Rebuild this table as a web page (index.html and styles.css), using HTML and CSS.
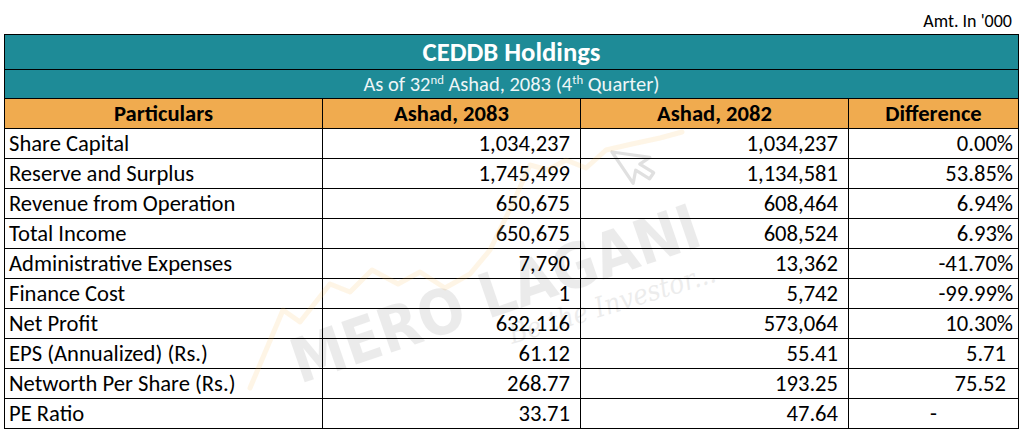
FILE: index.html
```html
<!DOCTYPE html>
<html lang="en">
<head>
<meta charset="utf-8">
<title>CEDDB Holdings</title>
<link rel="stylesheet" href="styles.css">
</head>
<body>
<div class="page">
  <div class="note">Amt. In '000</div>
  <table class="fin">
    <colgroup>
      <col class="c1"><col class="c2"><col class="c3"><col class="c4">
    </colgroup>
    <thead>
      <tr class="title"><th colspan="4">CEDDB Holdings</th></tr>
      <tr class="sub"><th colspan="4">As of 32<sup>nd</sup> Ashad, 2083 (4<sup>th</sup> Quarter)</th></tr>
      <tr class="head"><th>Particulars</th><th>Ashad, 2083</th><th>Ashad, 2082</th><th>Difference</th></tr>
    </thead>
    <tbody>
      <tr><td class="lbl">Share Capital</td><td class="num">1,034,237</td><td class="num">1,034,237</td><td class="pct">0.00%</td></tr>
      <tr><td class="lbl">Reserve and Surplus</td><td class="num">1,745,499</td><td class="num">1,134,581</td><td class="pct">53.85%</td></tr>
      <tr><td class="lbl">Revenue from Operation</td><td class="num">650,675</td><td class="num">608,464</td><td class="pct">6.94%</td></tr>
      <tr><td class="lbl">Total Income</td><td class="num">650,675</td><td class="num">608,524</td><td class="pct">6.93%</td></tr>
      <tr><td class="lbl">Administrative Expenses</td><td class="num">7,790</td><td class="num">13,362</td><td class="pct">-41.70%</td></tr>
      <tr><td class="lbl">Finance Cost</td><td class="num">1</td><td class="num">5,742</td><td class="pct">-99.99%</td></tr>
      <tr><td class="lbl">Net Profit</td><td class="num">632,116</td><td class="num">573,064</td><td class="pct">10.30%</td></tr>
      <tr><td class="lbl">EPS (Annualized) (Rs.)</td><td class="num">61.12</td><td class="num">55.41</td><td class="val">5.71</td></tr>
      <tr><td class="lbl">Networth Per Share (Rs.)</td><td class="num">268.77</td><td class="num">193.25</td><td class="val">75.52</td></tr>
      <tr><td class="lbl">PE Ratio</td><td class="num">33.71</td><td class="num">47.64</td><td class="dash">-</td></tr>
    </tbody>
  </table>
  <svg class="wm" viewBox="0 0 1023 434" aria-hidden="true">
    <polyline class="wm-line" points="250,388 283,310 300,322 330,284 350,292 372,270 398,284 420,272 445,288 470,274 490,250 512,205 530,165 548,170 566,160 586,168 606,150 632,144 660,138 682,132"/>
    <path class="wm-cursor" transform="translate(612,152) rotate(-34) scale(1.35)" d="M0 0 L0 28 L7 21 L12 32 L17 30 L12 19 L21 19 Z"/>
    <text class="wm-text" x="300" y="384" transform="rotate(-19 300 384)" textLength="428" lengthAdjust="spacingAndGlyphs">MERO LAGANI</text>
    <text class="wm-script" x="512" y="344" transform="rotate(-17 512 344)" textLength="215" lengthAdjust="spacingAndGlyphs">Be the Investor...</text>
  </svg>
</div>
</body>
</html>
```
FILE: styles.css
```css
body {
  margin: 0;
  background: #ffffff;
  color: #000000;
  font-family: "Carlito", "Lato", sans-serif;
}

.page {
  position: relative;
  width: 1023px;
  height: 434px;
  overflow: hidden;
}

.note {
  height: 34px;
  box-sizing: border-box;
  display: flex;
  justify-content: flex-end;
  align-items: flex-end;
  padding: 0 11px 2px 0;
  font-size: 18px;
  line-height: 22px;
}

.fin {
  margin-left: 4px;
  width: 1014px;
  border-collapse: collapse;
  table-layout: fixed;
}

.c1 { width: 318px; }
.c2 { width: 258px; }
.c3 { width: 268px; }
.c4 { width: 170px; }

.fin th,
.fin td {
  border: 1px solid #000000;
  padding: 0;
  white-space: nowrap;
  overflow: hidden;
}

.title th {
  background: #1e8b97;
  color: #ffffff;
  font-size: 26.7px;
  font-weight: 700;
  height: 34px;
  line-height: 34px;
}

.sub th {
  background: #1e8b97;
  color: #eef6f7;
  font-size: 20.5px;
  font-weight: 400;
  height: 28px;
  line-height: 28px;
}

.sub sup {
  font-size: 0.62em;
  line-height: 0;
  vertical-align: 0.55em;
}

.head th {
  background: #f0ab4f;
  font-size: 22.6px;
  font-weight: 700;
  height: 29px;
  line-height: 29px;
}

.fin td {
  font-size: 22.6px;
  height: 29px;
  line-height: 29px;
}

.fin .lbl { text-align: left; padding-left: 4px; }
.fin .num { text-align: right; padding-right: 10px; }
.fin .pct { text-align: right; padding-right: 5px; }
.fin .val { text-align: right; padding-right: 12px; }
.fin .dash { text-align: center; }

.wm {
  position: absolute;
  left: 0;
  top: 0;
  width: 1023px;
  height: 434px;
  pointer-events: none;
}

.wm-line {
  fill: none;
  stroke: #f7b84c;
  stroke-width: 5;
  stroke-linejoin: round;
  stroke-linecap: round;
  opacity: 0.14;
}

.wm-cursor {
  fill: none;
  stroke: #000000;
  stroke-width: 2.4;
  stroke-linejoin: round;
  opacity: 0.12;
}

.wm-text {
  font-family: "DejaVu Sans", sans-serif;
  font-weight: 700;
  font-size: 62px;
  fill: #000000;
  opacity: 0.075;
}

.wm-script {
  font-family: "DejaVu Serif", serif;
  font-style: italic;
  font-size: 28px;
  fill: #000000;
  opacity: 0.07;
}
```
